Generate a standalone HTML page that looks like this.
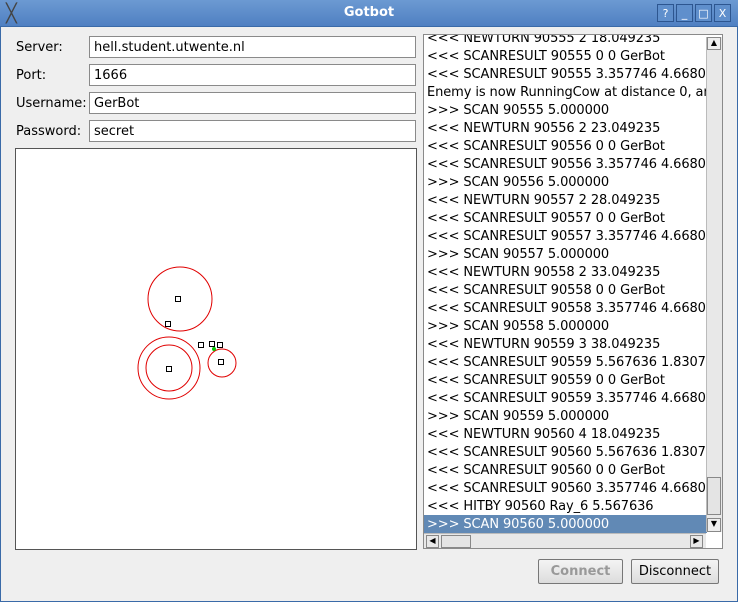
<html><head><style>
body{margin:0;width:738px;height:602px;background:#efefef;font-family:"DejaVu Sans",sans-serif;font-size:13px;position:relative;overflow:hidden}
.tb{position:absolute;left:0;top:0;width:738px;height:26px;background:linear-gradient(#6c9ad2,#4f80c2);border-bottom:1px solid #3a6aa8}
.tb .t{position:absolute;left:0;right:0;top:5px;text-align:center;color:#fff;font-weight:bold;font-size:13px}
.wb{position:absolute;top:4px;width:17px;height:18px;border:1px solid #2d5690;background:#5f8fcc;color:#fff;font-size:11px;text-align:center;line-height:17px;box-sizing:border-box}
.frame{position:absolute;left:0;top:26px;width:736px;height:575px;border:1px solid #3a6aa8;border-top:0}
.lbl{position:absolute;left:16px}
.in{position:absolute;left:89px;width:327px;height:22px;background:#fff;border:1px solid #8a8a8a;box-sizing:border-box;padding:3px 4px 0}
.cv{position:absolute;left:15px;top:148px;width:402px;height:402px;background:#fff;border:1px solid #555;box-sizing:border-box}
.lb{position:absolute;left:423px;top:34px;width:300px;height:515px;background:#fff;border:1px solid #8a8a8a;box-sizing:border-box;overflow:hidden}
.row{position:absolute;left:3px;height:18px;line-height:20px;white-space:nowrap;width:280px;overflow:hidden;letter-spacing:-0.1px}
.sel{background:#6189b5;color:#fff;left:0;padding-left:3px;width:280px}
.btn{position:absolute;top:559px;height:25px;border:1px solid #777;border-radius:2px;background:linear-gradient(#f4f4f4,#dcdcdc);box-sizing:border-box;text-align:center;line-height:24px}
</style></head><body>
<div class="tb"><div style="position:absolute;left:6px;top:3px;color:#444;font-size:18px">╳</div><div class="t">Gotbot</div>
<div class="wb" style="left:657px">?</div><div class="wb" style="left:676px">_</div><div class="wb" style="left:695px">□</div><div class="wb" style="left:714px">X</div></div>
<div class="frame"></div>
<div class="lbl" style="top:40px">Server:</div><div class="in" style="top:36px">hell.student.utwente.nl</div>
<div class="lbl" style="top:68px">Port:</div><div class="in" style="top:64px">1666</div>
<div class="lbl" style="top:96px">Username:</div><div class="in" style="top:92px">GerBot</div>
<div class="lbl" style="top:124px">Password:</div><div class="in" style="top:120px">secret</div>
<div class="cv"><svg width="400" height="400" style="position:absolute;left:0;top:0">
<g fill="none" stroke="#e00000"><circle cx="164" cy="150" r="32"/><circle cx="153" cy="219" r="31"/><circle cx="153" cy="219" r="23"/><circle cx="206" cy="214" r="14"/></g>
<g fill="#fff" stroke="#000"><rect x="159.5" y="147.5" width="5" height="5"/><rect x="149.5" y="172.5" width="5" height="5"/><rect x="150.5" y="217.5" width="5" height="5"/><rect x="182.5" y="193.5" width="5" height="5"/><rect x="193.5" y="192.5" width="5" height="5"/><rect x="201.5" y="193.5" width="5" height="5"/><rect x="202.5" y="210.5" width="5" height="5"/></g>
<circle cx="198" cy="200" r="2" fill="#0c0"/></svg></div>
<div class="lb">
<div class="row" style="top:-6px">&lt;&lt;&lt; NEWTURN 90555 2 18.049235</div>
<div class="row" style="top:12px">&lt;&lt;&lt; SCANRESULT 90555 0 0 GerBot</div>
<div class="row" style="top:30px">&lt;&lt;&lt; SCANRESULT 90555 3.357746 4.668022</div>
<div class="row" style="top:48px">Enemy is now RunningCow at distance 0, ang</div>
<div class="row" style="top:66px">&gt;&gt;&gt; SCAN 90555 5.000000</div>
<div class="row" style="top:84px">&lt;&lt;&lt; NEWTURN 90556 2 23.049235</div>
<div class="row" style="top:102px">&lt;&lt;&lt; SCANRESULT 90556 0 0 GerBot</div>
<div class="row" style="top:120px">&lt;&lt;&lt; SCANRESULT 90556 3.357746 4.668022</div>
<div class="row" style="top:138px">&gt;&gt;&gt; SCAN 90556 5.000000</div>
<div class="row" style="top:156px">&lt;&lt;&lt; NEWTURN 90557 2 28.049235</div>
<div class="row" style="top:174px">&lt;&lt;&lt; SCANRESULT 90557 0 0 GerBot</div>
<div class="row" style="top:192px">&lt;&lt;&lt; SCANRESULT 90557 3.357746 4.668022</div>
<div class="row" style="top:210px">&gt;&gt;&gt; SCAN 90557 5.000000</div>
<div class="row" style="top:228px">&lt;&lt;&lt; NEWTURN 90558 2 33.049235</div>
<div class="row" style="top:246px">&lt;&lt;&lt; SCANRESULT 90558 0 0 GerBot</div>
<div class="row" style="top:264px">&lt;&lt;&lt; SCANRESULT 90558 3.357746 4.668022</div>
<div class="row" style="top:282px">&gt;&gt;&gt; SCAN 90558 5.000000</div>
<div class="row" style="top:300px">&lt;&lt;&lt; NEWTURN 90559 3 38.049235</div>
<div class="row" style="top:318px">&lt;&lt;&lt; SCANRESULT 90559 5.567636 1.830775</div>
<div class="row" style="top:336px">&lt;&lt;&lt; SCANRESULT 90559 0 0 GerBot</div>
<div class="row" style="top:354px">&lt;&lt;&lt; SCANRESULT 90559 3.357746 4.668022</div>
<div class="row" style="top:372px">&gt;&gt;&gt; SCAN 90559 5.000000</div>
<div class="row" style="top:390px">&lt;&lt;&lt; NEWTURN 90560 4 18.049235</div>
<div class="row" style="top:408px">&lt;&lt;&lt; SCANRESULT 90560 5.567636 1.830775</div>
<div class="row" style="top:426px">&lt;&lt;&lt; SCANRESULT 90560 0 0 GerBot</div>
<div class="row" style="top:444px">&lt;&lt;&lt; SCANRESULT 90560 3.357746 4.668022</div>
<div class="row" style="top:462px">&lt;&lt;&lt; HITBY 90560 Ray_6 5.567636</div>
<div class="row sel" style="top:480px">&gt;&gt;&gt; SCAN 90560 5.000000</div>
<div style="position:absolute;left:282px;top:2px;width:15px;height:495px;background:#e8e8e8;border-left:1px solid #bbb">
<div style="position:absolute;top:0;left:0;width:14px;height:13px;border:1px solid #888;background:#eee;font-size:8px;text-align:center;box-sizing:border-box">▲</div>
<div style="position:absolute;top:440px;left:0;width:14px;height:38px;border:1px solid #888;background:#e4e4e4;box-sizing:border-box"></div>
<div style="position:absolute;top:481px;left:0;width:14px;height:14px;border:1px solid #888;background:#eee;font-size:8px;text-align:center;box-sizing:border-box">▼</div></div>
<div style="position:absolute;left:0;top:498px;width:282px;height:15px;background:#e8e8e8;border-top:1px solid #bbb">
<div style="position:absolute;left:2px;top:1px;width:13px;height:13px;border:1px solid #888;box-sizing:border-box;font-size:8px;text-align:center">◀</div>
<div style="position:absolute;left:17px;top:1px;width:30px;height:13px;border:1px solid #888;box-sizing:border-box;background:#e4e4e4"></div>
<div style="position:absolute;left:266px;top:1px;width:13px;height:13px;border:1px solid #888;box-sizing:border-box;font-size:8px;text-align:center">▶</div></div>
</div>
<div class="btn" style="left:538px;width:85px;color:#999;font-weight:bold">Connect</div>
<div class="btn" style="left:631px;width:88px">Disconnect</div>
</body></html>
